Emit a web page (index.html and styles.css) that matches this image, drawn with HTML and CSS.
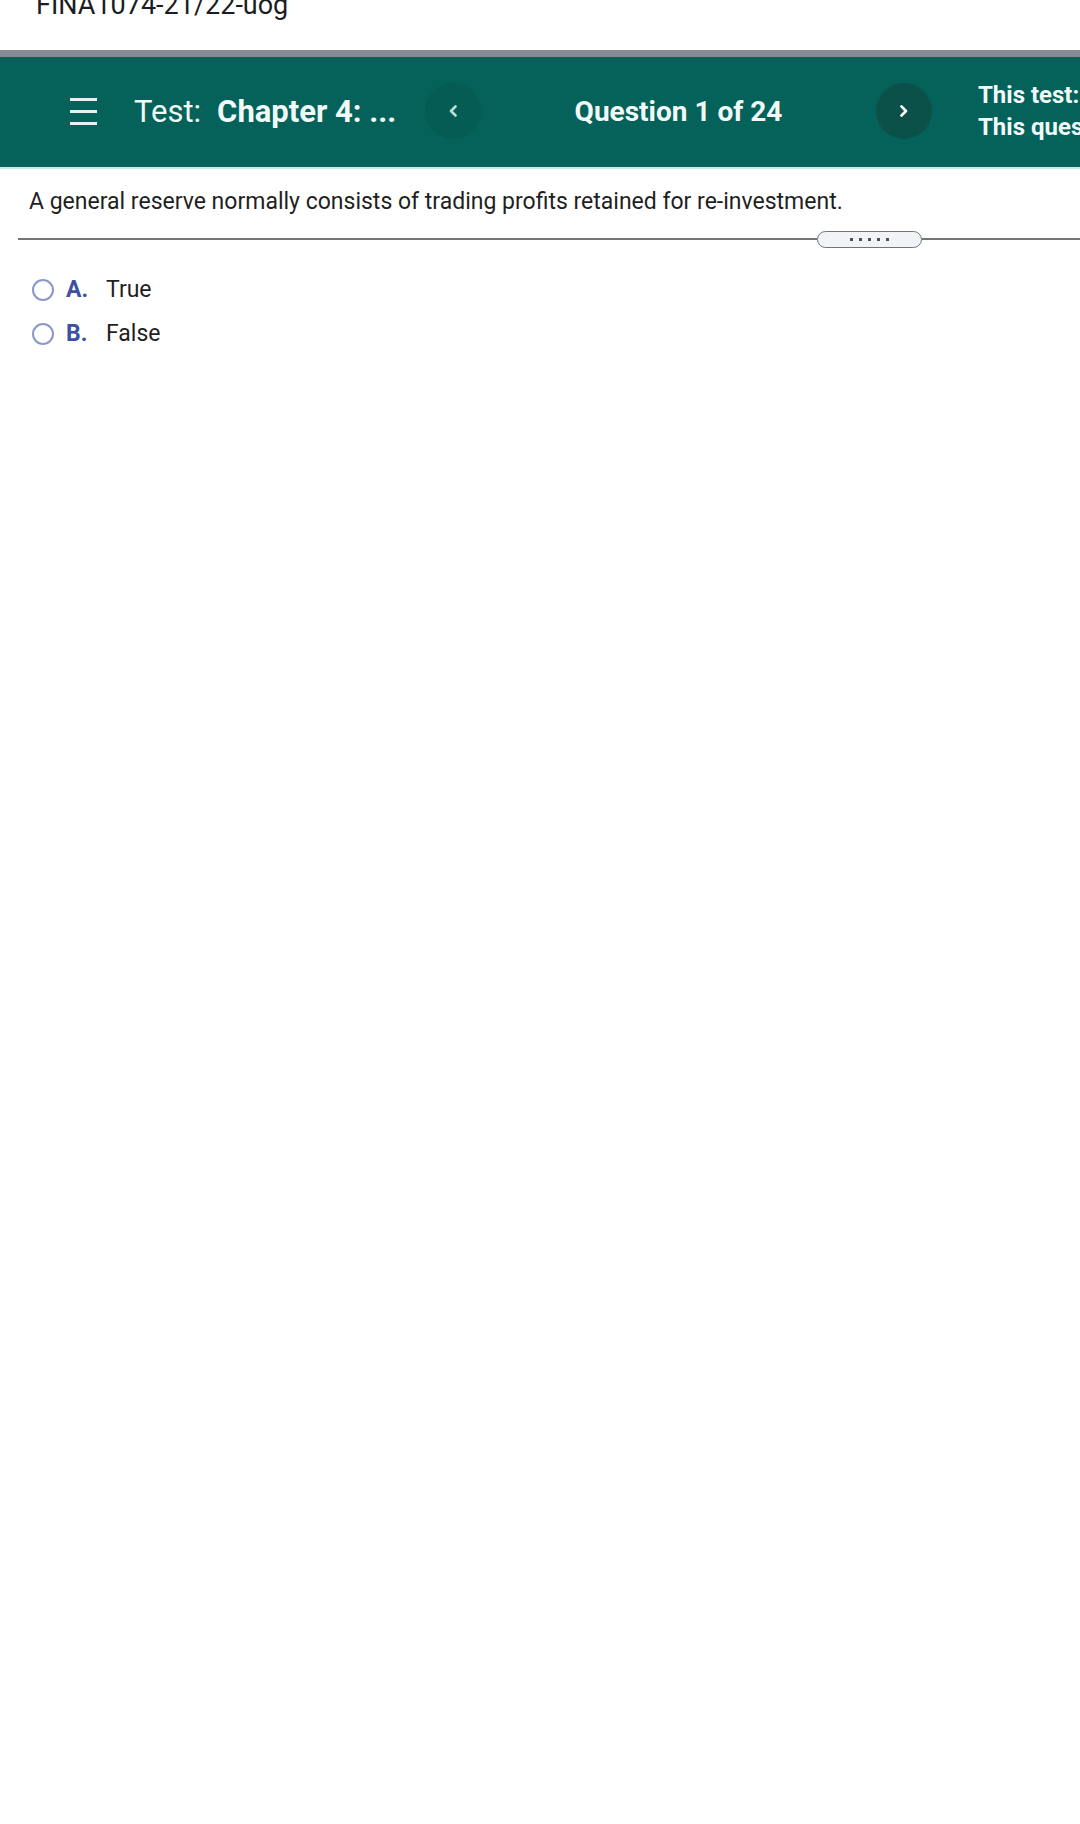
FILE: index.html
```html
<!DOCTYPE html>
<html lang="en">
<head>
<meta charset="utf-8">
<title>Test: Chapter 4</title>
<link rel="stylesheet" href="styles.css">
</head>
<body>
<div class="course-title"><span class="course-name">FINA1074-21/22-uog</span></div>
<div class="topbar"></div>
<header class="header">
  <button class="menu-btn" aria-label="Menu">
    <svg width="27" height="27" viewBox="0 0 27 27"><path d="M0 1.5H27M0 13.5H27M0 25.5H27" stroke="#e4f3f0" stroke-width="3" fill="none"/></svg>
  </button>
  <div class="test-title"><span class="test-label">Test:</span><span class="test-name">Chapter 4: ...</span></div>
  <button class="nav-btn prev" aria-label="Previous">
    <svg width="10" height="12" viewBox="0 0 10 12"><path d="M7.5 1.5L3 6l4.5 4.5" stroke="#b9dfd9" stroke-width="2.6" fill="none" stroke-linecap="round" stroke-linejoin="round"/></svg>
  </button>
  <div class="q-count">Question 1 of 24</div>
  <button class="nav-btn next" aria-label="Next">
    <svg width="10" height="12" viewBox="0 0 10 12"><path d="M2.5 1.5L7 6l-4.5 4.5" stroke="#ffffff" stroke-width="2.6" fill="none" stroke-linecap="round" stroke-linejoin="round"/></svg>
  </button>
  <div class="score-info">
    <div>This test: 24 point(s) possible</div>
    <div>This question: 1 point(s) possible</div>
  </div>
</header>
<main class="content">
  <p class="question">A general reserve normally consists of trading profits retained for re-investment.</p>
  <div class="divider">
    <div class="rule rule-left"></div>
    <div class="pill"><i></i><i></i><i></i><i></i><i></i></div>
    <div class="rule rule-right"></div>
  </div>
  <div class="options">
    <label class="option"><span class="radio"></span><span class="opt-letter">A.</span><span class="opt-text">True</span></label>
    <label class="option"><span class="radio"></span><span class="opt-letter">B.</span><span class="opt-text">False</span></label>
  </div>
</main>
</body>
</html>
```

FILE: styles.css
```css
html, body {
  margin: 0;
  padding: 0;
  background: #ffffff;
  overflow: hidden;
  width: 1080px;
}
body {
  font-family: Roboto, "Liberation Sans", Arial, sans-serif;
  color: #212121;
}
.course-title {
  height: 50px;
  overflow: hidden;
  padding-left: 36px;
}
.course-name {
  display: block;
  font-size: 27px;
  line-height: 32px;
  margin-top: -11px;
  color: #1b1d22;
  white-space: nowrap;
}
.topbar {
  height: 7px;
  background: #858c95;
}
.header {
  height: 112px;
  box-sizing: border-box;
  padding-bottom: 2px;
  background: #04625a;
  border-bottom: 2px solid #cce9e7;
  display: flex;
  align-items: center;
  color: #f1faf8;
  overflow: hidden;
  white-space: nowrap;
}
.menu-btn {
  margin-left: 70px;
  width: 27px;
  height: 27px;
  padding: 0;
  border: 0;
  background: none;
  display: flex;
  flex-shrink: 0;
}
.test-title {
  margin-left: 37px;
  width: 291px;
  font-size: 31px;
  flex-shrink: 0;
}
.test-label {
  font-weight: 400;
}
.test-name {
  font-weight: 700;
  margin-left: 16px;
}
.nav-btn {
  width: 56px;
  height: 56px;
  border-radius: 50%;
  border: 0;
  padding: 0;
  display: flex;
  align-items: center;
  justify-content: center;
  flex-shrink: 0;
}
.nav-btn.prev {
  background: #055c54;
}
.nav-btn.next {
  background: #0b5149;
}
.q-count {
  width: 395px;
  flex-shrink: 0;
  text-align: center;
  font-size: 28px;
  font-weight: 700;
}
.score-info {
  margin-left: 46px;
  font-size: 24px;
  font-weight: 700;
  line-height: 32px;
  flex-shrink: 0;
}
.question {
  margin: 17px 0 0 29px;
  font-size: 23px;
  line-height: 32px;
  color: #1f1f1f;
}
.divider {
  display: flex;
  align-items: center;
  margin-top: 12px;
  margin-left: 18px;
  height: 18px;
}
.rule {
  height: 1.5px;
  background: #6e757b;
}
.rule-left {
  width: 799px;
}
.rule-right {
  flex: 1;
}
.pill {
  width: 103px;
  height: 15px;
  border: 1.5px solid #6e757b;
  border-radius: 10px;
  background: #f2f3f6;
  display: flex;
  align-items: center;
  justify-content: center;
  gap: 6px;
}
.pill i {
  width: 3px;
  height: 3px;
  background: #4d5257;
  display: block;
}
.options {
  margin-top: 20px;
  display: flex;
  flex-direction: column;
}
.option {
  height: 44px;
  display: flex;
  align-items: center;
  padding-left: 32px;
  font-size: 23px;
  line-height: 26px;
}
.radio {
  width: 18px;
  height: 18px;
  border: 2px solid #8a97cb;
  border-radius: 50%;
  box-sizing: content-box;
  flex-shrink: 0;
}
.opt-letter {
  margin-left: 12px;
  width: 40px;
  font-weight: 700;
  color: #3e50a2;
}
.opt-text {
  color: #1f1f1f;
}
```
